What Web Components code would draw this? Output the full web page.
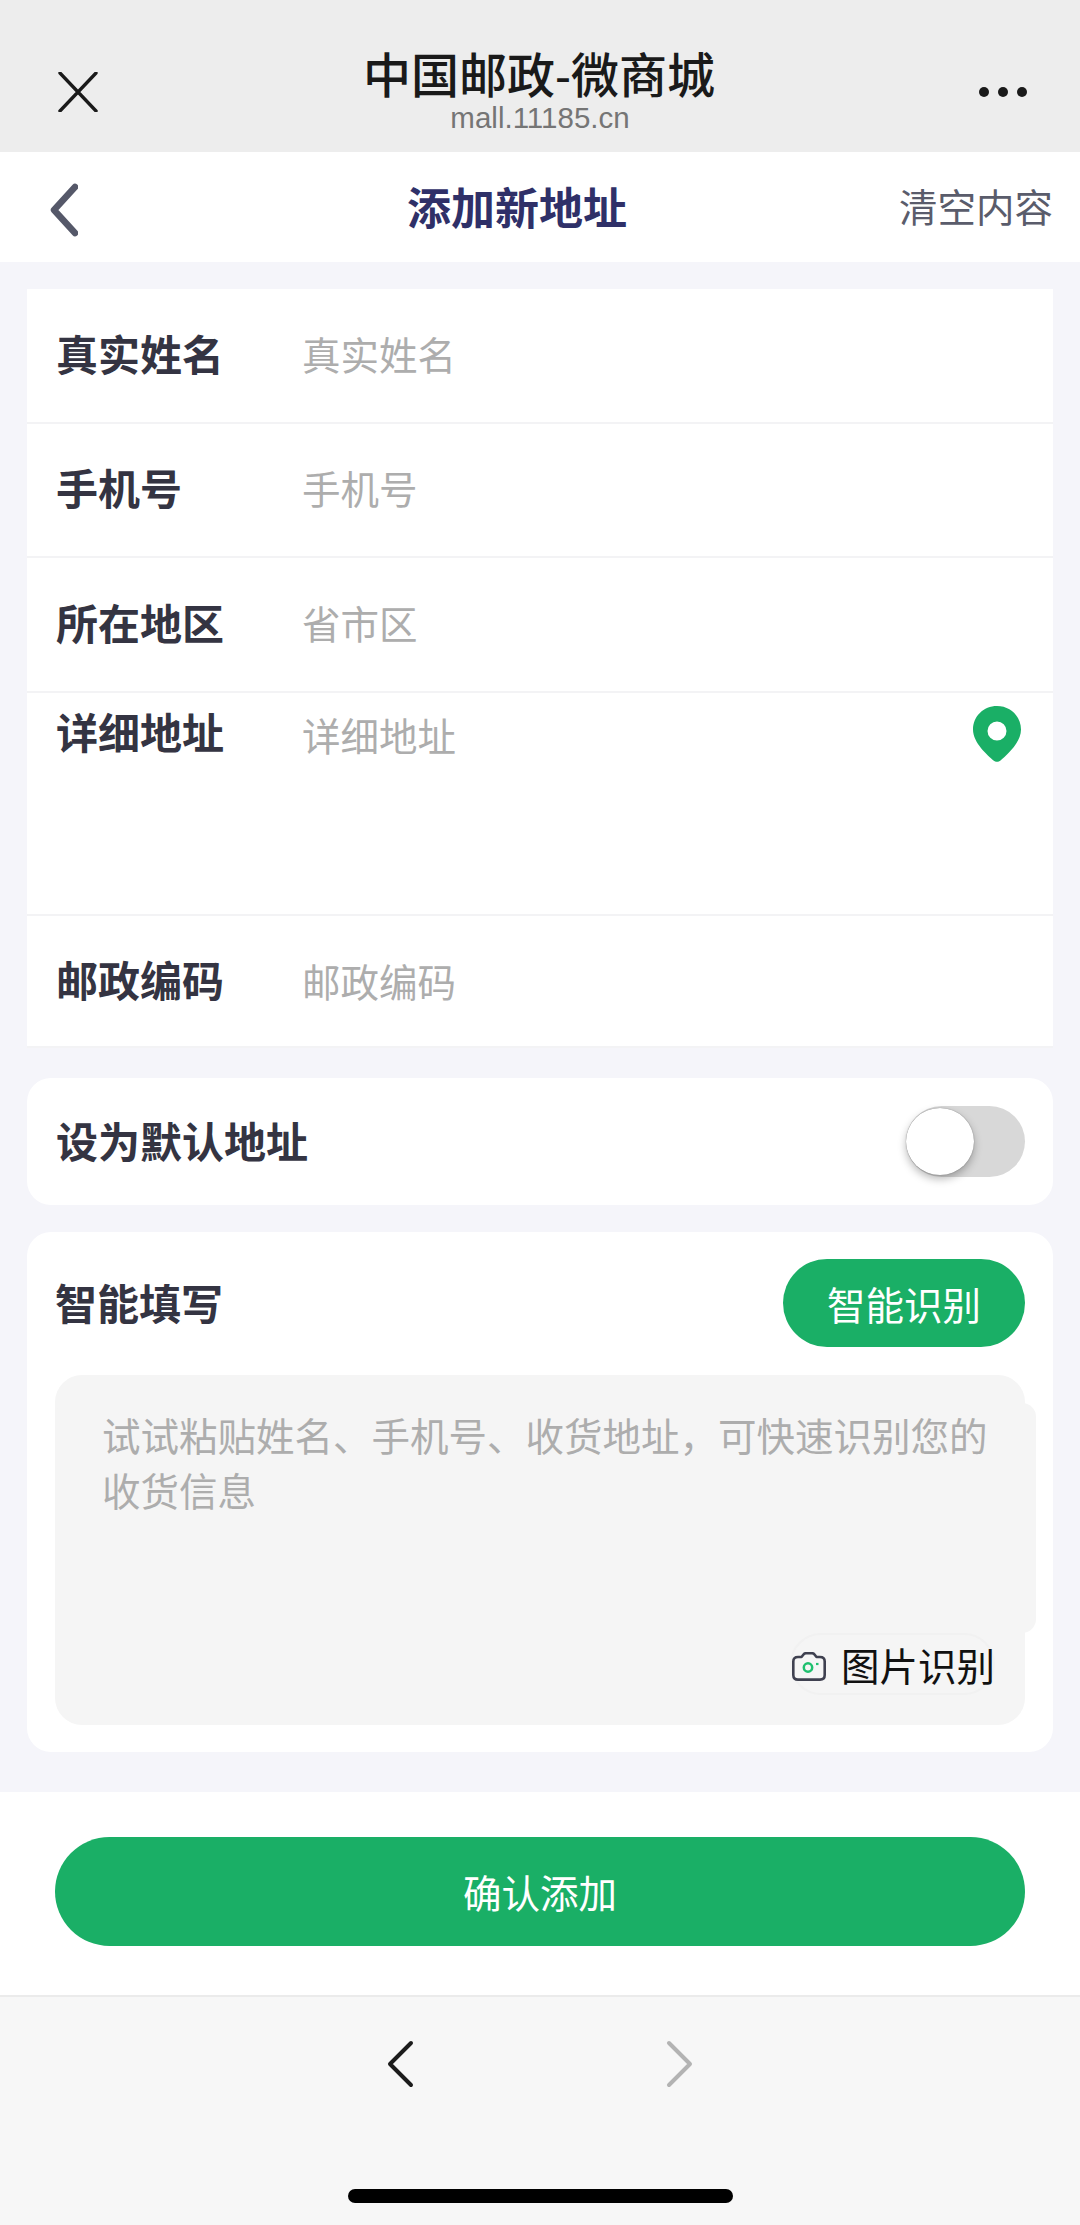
<!DOCTYPE html>
<html lang="zh">
<head>
<meta charset="utf-8">
<title>添加新地址</title>
<style>
  html, body { margin: 0; padding: 0; }
  body {
    width: 1080px; height: 2225px; overflow: hidden;
    background: #f5f5fa;
    font-family: "Noto Sans CJK SC", "Noto Sans", sans-serif;
    display: flex; flex-direction: column;
  }
</style>
</head>
<body>
  <wx-header title="中国邮政-微商城" url="mall.11185.cn"></wx-header>
  <page-nav action="清空内容">添加新地址</page-nav>
  <form-card>
    <form-row label="真实姓名">真实姓名</form-row>
    <form-row label="手机号">手机号</form-row>
    <form-row label="所在地区">省市区</form-row>
    <form-row label="详细地址" tall>详细地址<map-pin slot="end"></map-pin></form-row>
    <form-row label="邮政编码" last>邮政编码</form-row>
  </form-card>
  <default-row>设为默认地址</default-row>
  <smart-fill>试试粘贴姓名、手机号、收货地址，可快速识别您的收货信息</smart-fill>
  <confirm-bar>确认添加</confirm-bar>
  <browser-bar></browser-bar>

  <script>
    // маленький помощник: shadow root из строки
    function shadow(el, html) {
      el.attachShadow({ mode: 'open' }).innerHTML = html;
    }

    class WxHeader extends HTMLElement {
      connectedCallback() {
        shadow(this, `
          <style>
            :host { display: flex; flex: none; height: 152px; background: #ededed; box-sizing: border-box; position: relative; justify-content: center; }
            .t { text-align: center; padding-top: 51px; }
            .title { font-family: "Liberation Sans", "Noto Sans CJK SC", sans-serif; font-size: 48px; line-height: 52px; font-weight: 500; color: #1a1a1a; margin-left: -2px; }
            .url { font-family: "Liberation Sans", sans-serif; font-size: 29.5px; line-height: 34px; color: #757575; margin-top: -2px; }
            svg { position: absolute; }
            .close { left: 58px; top: 72px; }
            .more { left: 978px; top: 86px; }
          </style>
          <svg class="close" width="40" height="40" viewBox="0 0 40 40"><path d="M2 1 L38 39 M38 1 L2 39" stroke="#1a1a1a" stroke-width="3.4" stroke-linecap="round"/></svg>
          <div class="t"><div class="title">${this.getAttribute('title')}</div><div class="url">${this.getAttribute('url')}</div></div>
          <svg class="more" width="50" height="12" viewBox="0 0 50 12"><circle cx="6" cy="6" r="5" fill="#1a1a1a"/><circle cx="25" cy="6" r="5" fill="#1a1a1a"/><circle cx="44" cy="6" r="5" fill="#1a1a1a"/></svg>
        `);
      }
    }

    class PageNav extends HTMLElement {
      connectedCallback() {
        shadow(this, `
          <style>
            :host { display: flex; flex: none; height: 110px; background: #fff; box-sizing: border-box; padding-right: 46px; align-items: center; justify-content: center; position: relative; }
            .title { font-size: 44px; font-weight: 700; color: #2f3068; line-height: 60px; margin-top: -2px; }
            svg { position: absolute; left: 46px; top: 31px; }
            .act { position: absolute; right: 27px; top: 26px; font-size: 38.5px; line-height: 54px; color: #5a5c6b; }
          </style>
          <svg width="32" height="54" viewBox="0 0 32 54"><path d="M29 4 L8 27 L29 50" fill="none" stroke="#555869" stroke-width="6.5" stroke-linecap="round" stroke-linejoin="round"/></svg>
          <div class="title"><slot></slot></div>
          <div class="act">${this.getAttribute('action')}</div>
        `);
      }
    }

    class FormCard extends HTMLElement {
      connectedCallback() {
        shadow(this, `
          <style>
            :host { display: block; flex: none; margin: 27px 27px 0; background: #fff; }
          </style>
          <slot></slot>
        `);
      }
    }

    class FormRow extends HTMLElement {
      connectedCallback() {
        const tall = this.hasAttribute('tall');
        const last = this.hasAttribute('last');
        shadow(this, `
          <style>
            :host { display: flex; box-sizing: border-box; height: ${tall ? 223 : 134.5}px; padding: 0 28px 0 29px; border-bottom: 2px solid #f3f3f5; align-items: ${tall ? 'flex-start' : 'center'}; position: relative; }
            :host([last]) { height: 132.5px; }
            .label { width: 246px; font-size: 42px; font-weight: 700; line-height: 58px; color: #343442; flex: none; margin-top: ${tall ? 9 : last ? -4 : -5}px; }
            .ph { flex: 1; font-size: 38.5px; line-height: 56px; color: #adadad; margin-top: ${tall ? 13 : last ? -2 : -5}px; }
            ::slotted(map-pin) { position: absolute; right: 32px; top: 13px; }
          </style>
          <div class="label">${this.getAttribute('label')}</div>
          <div class="ph"><slot></slot></div>
          <slot name="end"></slot>
        `);
      }
    }

    class MapPin extends HTMLElement {
      connectedCallback() {
        shadow(this, `
          <style>:host { display: block; width: 48px; height: 56px; } svg { display: block; }</style>
          <svg width="48" height="56" viewBox="0 0 48 56"><path fill-rule="evenodd" fill="#1aaf66" d="M24 0 C37.5 0 48 10.5 48 23.5 C48 37 33 49.5 27.5 54.5 C25.5 56.3 22.5 56.3 20.5 54.5 C15 49.5 0 37 0 23.5 C0 10.5 10.5 0 24 0 Z M24 15.5 A9.5 9.5 0 1 0 24 34.5 A9.5 9.5 0 1 0 24 15.5 Z"/></svg>
        `);
      }
    }

    class DefaultRow extends HTMLElement {
      connectedCallback() {
        shadow(this, `
          <style>
            :host { display: flex; flex: none; box-sizing: border-box; height: 127px; margin: 30px 27px 0; padding: 0 28px 0 29px; background: #fff; border-radius: 24px; align-items: center; justify-content: space-between; }
            .label { font-size: 42px; font-weight: 700; line-height: 58px; color: #343442; margin-top: -4px; }
            .track { width: 119px; height: 71px; border-radius: 36px; background: #d8d8d8; position: relative; margin-top: -1px; }
            .knob { position: absolute; left: 0; top: 2px; width: 68px; height: 67px; border-radius: 50%; background: #fff; box-shadow: 0 4px 8px rgba(0,0,0,.28), 0 0 1px rgba(0,0,0,.5); }
          </style>
          <div class="label"><slot></slot></div>
          <div class="track"><div class="knob"></div></div>
        `);
      }
    }

    class SmartFill extends HTMLElement {
      connectedCallback() {
        shadow(this, `
          <style>
            :host { display: block; flex: none; box-sizing: border-box; height: 520px; margin: 27px 27px 0; padding: 27px 28px; background: #fff; border-radius: 24px; }
            .head { display: flex; align-items: center; justify-content: space-between; height: 88px; }
            .label { font-size: 42px; font-weight: 700; line-height: 58px; color: #343442; margin-top: -3px; }
            .btn { width: 242px; height: 88px; border-radius: 44px; background: #1aaf66; color: #fff; font-size: 38.5px; line-height: 88px; text-align: center; }
            .area { height: 350px; margin-top: 28px; background: #f5f5f5; border-radius: 27px; position: relative; }
            /* textarea торчит за край блока, как на скрине */
            .ta { position: absolute; left: 0; right: -11px; top: 28px; height: 230px; box-sizing: border-box; padding: 4px 30px 0 47px; background: #f5f5f5; border-radius: 14px; font-size: 38.5px; line-height: 55px; color: #adadad; }
            .pic { position: absolute; left: 735px; top: 258px; box-sizing: border-box; width: 205px; height: 62px; border: 2px solid #f1f1f1; border-radius: 31px; display: flex; align-items: center; white-space: nowrap; }
            .pic svg { flex: none; margin: 4px 0 0 0; }
            .pic span { font-size: 38.5px; line-height: 54px; color: #111; margin-left: 15px; }
          </style>
          <div class="head">
            <div class="label">智能填写</div>
            <div class="btn">智能识别</div>
          </div>
          <div class="area">
            <div class="ta"><slot></slot></div>
            <div class="pic">
              <svg width="34" height="29" viewBox="0 0 34 29"><path d="M9.5 5 L11.5 2.5 Q12.5 1.2 14 1.2 H20 Q21.5 1.2 22.5 2.5 L24.5 5 H28 Q32.7 5 32.7 9.5 V23 Q32.7 27.6 28 27.6 H6 Q1.3 27.6 1.3 23 V9.5 Q1.3 5 6 5 Z" fill="none" stroke="#3f4150" stroke-width="2.6" stroke-linejoin="round"/><circle cx="16" cy="15.5" r="4.2" fill="none" stroke="#1fc06f" stroke-width="2.5"/><path d="M24 12 H26.5" stroke="#1fc06f" stroke-width="2.2"/></svg>
              <span>图片识别</span>
            </div>
          </div>
        `);
      }
    }

    class ConfirmBar extends HTMLElement {
      connectedCallback() {
        shadow(this, `
          <style>
            :host { display: block; flex: none; box-sizing: border-box; height: 205px; margin-top: 40px; padding: 45px 55px 0; background: #fff; border-bottom: 2px solid #ebebeb; }
            .btn { height: 109px; border-radius: 55px; background: #1aaf66; color: #fff; font-size: 38.5px; line-height: 109px; text-align: center; }
          </style>
          <div class="btn"><slot></slot></div>
        `);
      }
    }

    class BrowserBar extends HTMLElement {
      connectedCallback() {
        shadow(this, `
          <style>
            :host { display: block; flex: 1; background: #f7f7f7; position: relative; }
            .arrows { display: flex; justify-content: center; gap: 252px; padding-top: 43px; }
            svg { display: block; }
            .home { position: absolute; left: 348px; top: 192px; width: 385px; height: 14px; border-radius: 7px; background: #000; }
          </style>
          <div class="arrows">
            <svg width="28" height="48" viewBox="0 0 28 48"><path d="M25 3 L4 24 L25 45" fill="none" stroke="#1c1c1c" stroke-width="4" stroke-linecap="round" stroke-linejoin="round"/></svg>
            <svg width="28" height="48" viewBox="0 0 28 48"><path d="M3 3 L24 24 L3 45" fill="none" stroke="#b3b3b3" stroke-width="4" stroke-linecap="round" stroke-linejoin="round"/></svg>
          </div>
          <div class="home"></div>
        `);
      }
    }

    customElements.define('wx-header', WxHeader);
    customElements.define('page-nav', PageNav);
    customElements.define('form-card', FormCard);
    customElements.define('form-row', FormRow);
    customElements.define('map-pin', MapPin);
    customElements.define('default-row', DefaultRow);
    customElements.define('smart-fill', SmartFill);
    customElements.define('confirm-bar', ConfirmBar);
    customElements.define('browser-bar', BrowserBar);
  </script>
</body>
</html>
